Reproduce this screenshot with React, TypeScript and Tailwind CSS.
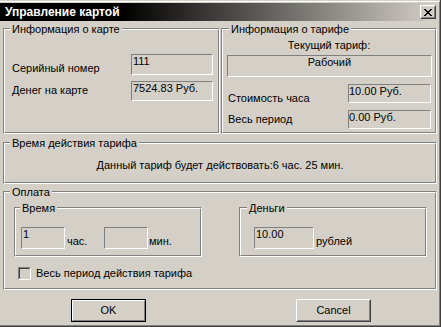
import React from "react";

const sunken =
  "border border-t-[#808080] border-l-[#808080] border-r-white border-b-white";

function Group({
  className,
  legend,
  legendLeft,
  children,
}: {
  className: string;
  legend: string;
  legendLeft: string;
  children?: React.ReactNode;
}) {
  return (
    <div
      className={`relative border border-t-[#808080] border-l-[#808080] border-r-white border-b-white ${className}`}
    >
      <div className="h-full border border-t-white border-l-white border-r-[#808080] border-b-[#808080]">
        {children}
      </div>
      <span
        className={`absolute top-[-6px] ${legendLeft} bg-[#d4d0c8] px-[2px] leading-[13px] whitespace-nowrap`}
      >
        {legend}
      </span>
    </div>
  );
}

export default function App() {
  return (
    <div className="w-[441px] h-[327px] bg-[#d4d0c8] pt-[1px] border-r border-b border-r-[#404040] border-b-[#404040] text-[11px] leading-[13px] text-black [font-family:'Liberation_Sans',Arial,sans-serif] overflow-hidden">
      <div className="h-full border-t border-r border-b border-t-white border-r-[#808080] border-b-[#808080] pt-[1px] pr-[2px] pb-[2px] flex flex-col">
        {/* Title bar */}
        <div className="h-[18px] shrink-0 flex items-center bg-[linear-gradient(to_right,#000000_28%,#d4d0c8)]">
          <span className="pl-[5px] text-white font-bold text-[12px] leading-[14px] whitespace-nowrap">
            Управление картой
          </span>
          <div className="ml-auto mr-[1px] w-[16px] h-[14px] border border-t-white border-l-white border-r-[#404040] border-b-[#404040]">
            <div className="h-full border border-t-[#d4d0c8] border-l-[#d4d0c8] border-r-[#808080] border-b-[#808080] flex items-center justify-center">
              <svg width="8" height="7" viewBox="0 0 8 7" shapeRendering="crispEdges">
                <path
                  d="M0 0h2v1h-2zM6 0h2v1h-2zM1 1h2v1h-2zM5 1h2v1h-2zM2 2h4v1h-4zM3 3h2v1h-2zM2 4h4v1h-4zM1 5h2v1h-2zM5 5h2v1h-2zM0 6h2v1h-2zM6 6h2v1h-2z"
                  fill="#000"
                />
              </svg>
            </div>
          </div>
        </div>

        {/* Body */}
        <div className="pl-[3px] flex flex-col">
          {/* Top row */}
          <div className="mt-[7px] flex">
            <Group className="w-[217px] h-[106px]" legend="Информация о карте" legendLeft="left-[6px]">
              <div className="mt-[24px] ml-[7px] flex items-start">
                <span className="w-[119px] mt-[8px] whitespace-nowrap">Серийный номер</span>
                <div className={`w-[82px] h-[21px] pl-[1px] ${sunken}`}>111</div>
              </div>
              <div className="mt-[6px] ml-[7px] flex items-start">
                <span className="w-[119px] mt-[3px] whitespace-nowrap">Денег на карте</span>
                <div className={`w-[82px] h-[20px] pl-[1px] ${sunken}`}>7524.83 Руб.</div>
              </div>
            </Group>
            <Group className="ml-[1px] w-[216px] h-[106px]" legend="Информация о тарифе" legendLeft="left-[7px]">
              <div className="mt-[9px] text-center">Текущий тариф:</div>
              <div className={`mt-[3px] ml-[4px] w-[205px] h-[22px] text-center ${sunken}`}>Рабочий</div>
              <div className="mt-[7px] ml-[5px] flex items-start">
                <span className="w-[120px] mt-[8px] whitespace-nowrap">Стоимость часа</span>
                <div className={`w-[83px] h-[19px] ${sunken}`}>10.00 Руб.</div>
              </div>
              <div className="mt-[5px] ml-[5px] flex items-start">
                <span className="w-[120px] mt-[3px] whitespace-nowrap">Весь период</span>
                <div className={`w-[83px] h-[19px] ${sunken}`}>0.00 Руб.</div>
              </div>
            </Group>
          </div>

          {/* Tariff time */}
          <Group className="mt-[8px] w-[434px] h-[42px]" legend="Время действия тарифа" legendLeft="left-[6px]">
            <div className="mt-[15px] text-center whitespace-nowrap">
              Данный тариф будет действовать:6 час. 25 мин.
            </div>
          </Group>

          {/* Payment */}
          <Group className="mt-[7px] w-[434px] h-[99px]" legend="Оплата" legendLeft="left-[6px]">
            <div className="mt-[14px] ml-[9px] flex">
              <Group className="w-[188px] h-[50px]" legend="Время" legendLeft="left-[5px]">
                <div className="mt-[18px] ml-[5px] flex items-start">
                  <div className={`w-[44px] h-[22px] pl-[1px] ${sunken}`}>1</div>
                  <span className="ml-[2px] w-[37px] mt-[8px]">час.</span>
                  <div className={`w-[44px] h-[22px] ${sunken}`}></div>
                  <span className="ml-[1px] mt-[8px]">мин.</span>
                </div>
              </Group>
              <Group className="ml-[37px] w-[188px] h-[50px]" legend="Деньги" legendLeft="left-[7px]">
                <div className="mt-[18px] ml-[13px] flex items-start">
                  <div className={`w-[60px] h-[22px] pl-[1px] ${sunken}`}>10.00</div>
                  <span className="ml-[2px] mt-[8px]">рублей</span>
                </div>
              </Group>
            </div>
            <div className="mt-[10px] ml-[13px] flex items-start">
              <div className="w-[13px] h-[13px] border border-t-[#808080] border-l-[#808080] border-r-white border-b-white">
                <div className="h-full border border-t-[#404040] border-l-[#404040] border-r-[#d4d0c8] border-b-[#d4d0c8] bg-[#d4d0c8]"></div>
              </div>
              <span className="ml-[5px] whitespace-nowrap">Весь период действия тарифа</span>
            </div>
          </Group>

          {/* Buttons */}
          <div className="mt-[9px] flex">
            <div className="ml-[68px] w-[75px] h-[23px] border border-black">
              <div className="h-full border border-t-white border-l-white border-r-[#808080] border-b-[#808080] flex items-center justify-center">
                OK
              </div>
            </div>
            <div className="ml-[150px] w-[75px] h-[23px] border border-t-white border-l-white border-r-[#404040] border-b-[#404040]">
              <div className="h-full border border-t-[#d4d0c8] border-l-[#d4d0c8] border-r-[#808080] border-b-[#808080] flex items-center justify-center">
                Cancel
              </div>
            </div>
          </div>
        </div>
      </div>
    </div>
  );
}
